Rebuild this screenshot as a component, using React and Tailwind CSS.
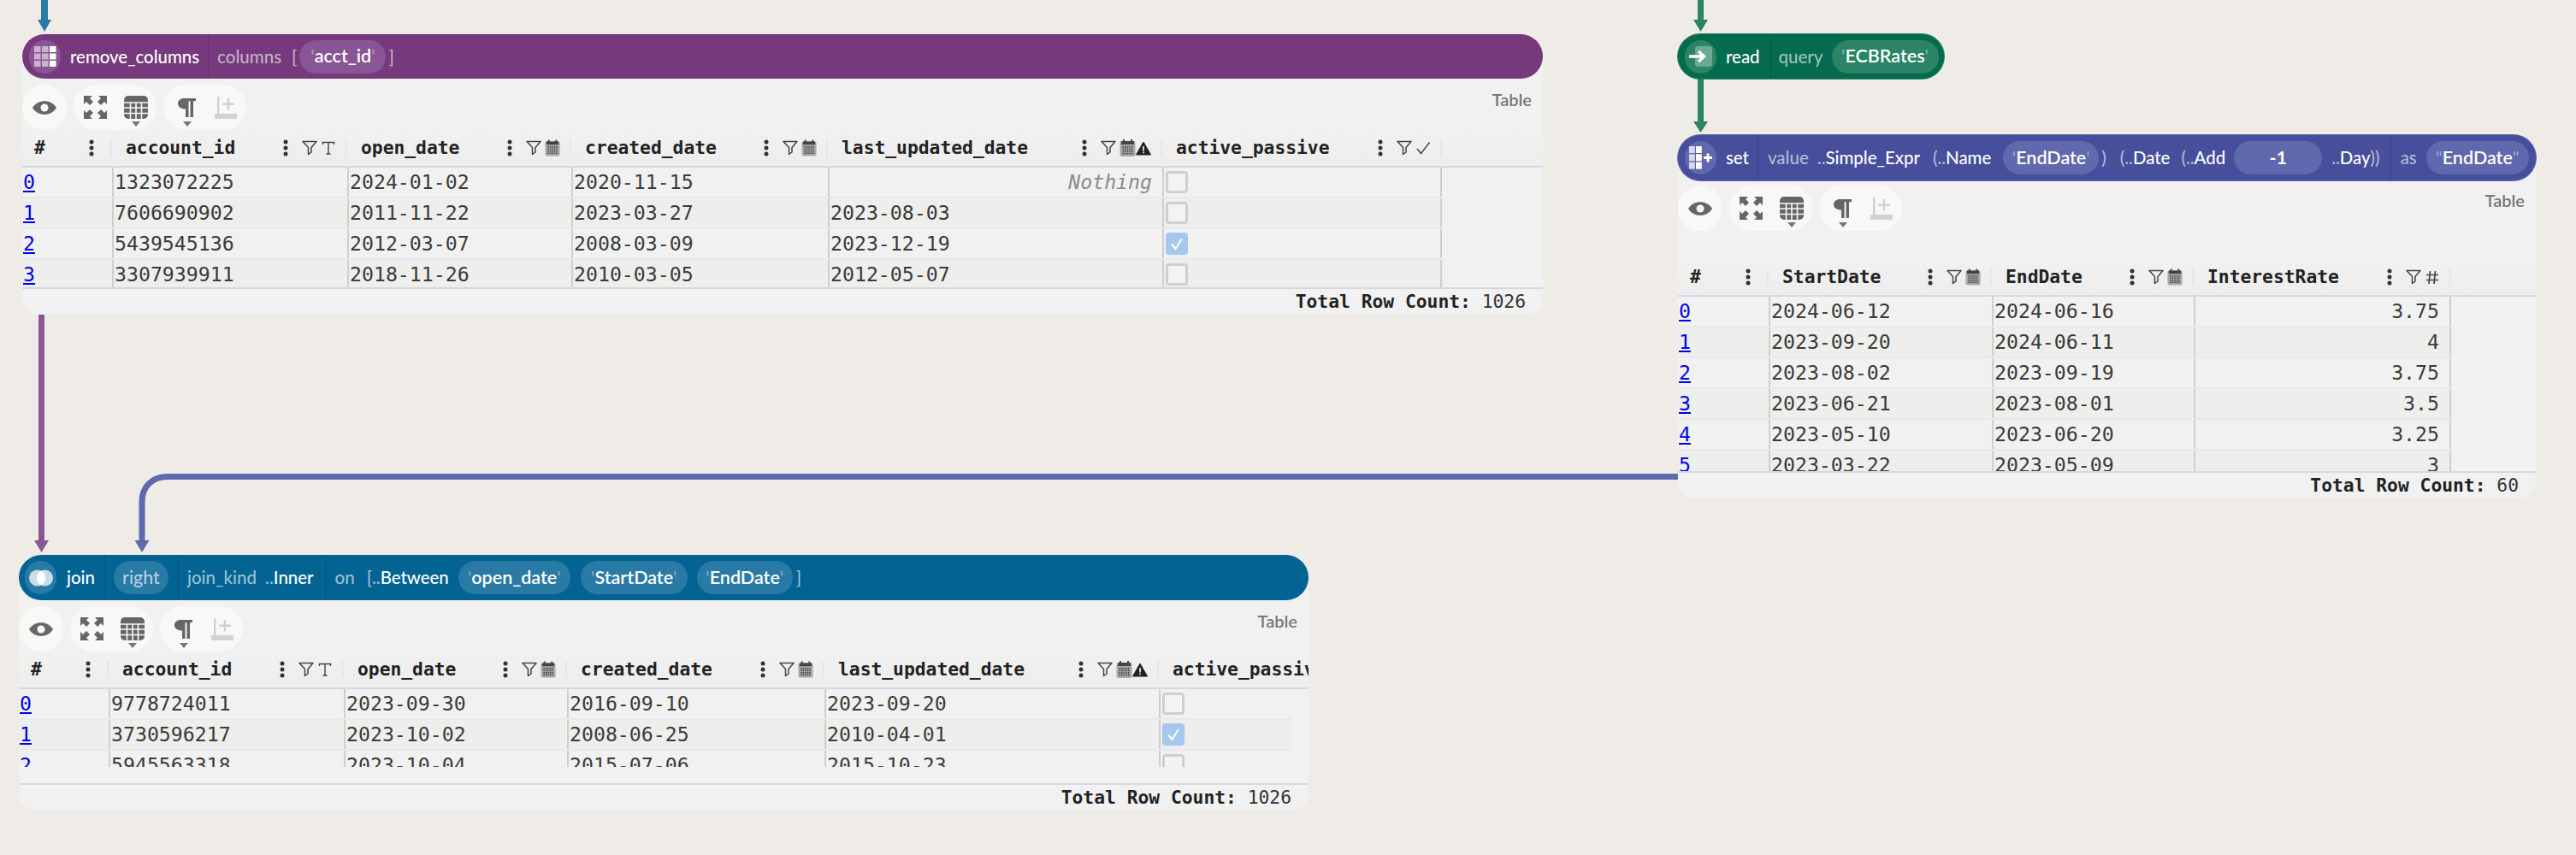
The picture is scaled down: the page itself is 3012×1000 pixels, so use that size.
import React from "react";

const MONO = "[font-family:'DejaVu_Sans_Mono',monospace]";
const UI = "[font-family:'Lato',sans-serif]";

function Eye() {
  return (
    <svg width="28" height="16" viewBox="0 0 28 16">
      <path d="M0 8C6-2.5 22-2.5 28 8C22 18.5 6 18.5 0 8Z" fill="#666" />
      <circle cx="14" cy="8" r="4.5" fill="#f8f8f7" />
    </svg>
  );
}
function Expand() {
  const a = "M0 0H10L7 3L11 7L7 11L3 7L0 10Z";
  return (
    <svg width="27" height="27" viewBox="0 0 27 27" fill="#666">
      <path d={a} />
      <path d={a} transform="translate(27 0) scale(-1 1)" />
      <path d={a} transform="translate(0 27) scale(1 -1)" />
      <path d={a} transform="translate(27 27) scale(-1 -1)" />
    </svg>
  );
}
function GridIcon() {
  return (
    <svg width="28" height="27" viewBox="0 0 28 27">
      <rect width="28" height="27" rx="5" fill="#666" />
      <g stroke="#f8f8f7" strokeWidth="1.6">
        <path d="M0 8H28M0 14H28M0 20.5H28M7.5 8V27M14 8V27M20.5 8V27" />
      </g>
    </svg>
  );
}
function Pilcrow() {
  return (
    <svg width="21" height="22" viewBox="0 0 21 22" fill="#666">
      <path d="M7.5 0H21V3.2H18V22H14.5V3.2H12.5V22H9V12.5C3.5 12.5 0 10 0 6.2S3 0 7.5 0Z" />
    </svg>
  );
}
function AddRow() {
  return (
    <svg width="26" height="26" viewBox="0 0 26 26" fill="#d2d2d2">
      <rect x="0" y="20" width="26" height="6" />
      <rect x="3" y="0" width="2.5" height="20" />
      <rect x="9" y="7.5" width="14" height="2.5" />
      <rect x="14.7" y="2" width="2.5" height="13.5" />
    </svg>
  );
}
function Tri() {
  return (
    <svg width="10" height="6" viewBox="0 0 10 6" className="absolute left-1/2 -translate-x-1/2 top-[30px]">
      <path d="M0 0H10L5 6Z" fill="#777" />
    </svg>
  );
}
function Kebab() {
  return (
    <svg width="6" height="20" viewBox="0 0 6 20" fill="#333" className="shrink-0">
      <circle cx="3" cy="3" r="2.5" />
      <circle cx="3" cy="10" r="2.5" />
      <circle cx="3" cy="17" r="2.5" />
    </svg>
  );
}
function Funnel() {
  return (
    <svg width="18" height="18" viewBox="0 0 18 18" fill="none" stroke="#444" strokeWidth="1.5" strokeLinejoin="round">
      <path d="M1 1.5H17L11 8.5V14L7.5 16.5V8.5Z" />
    </svg>
  );
}
function Calendar() {
  const dots = [];
  for (let r = 0; r < 4; r++) for (let c = 0; c < 5; c++) dots.push(<rect key={r + "-" + c} x={3.5 + c * 2.6} y={8 + r * 2.6} width="1.6" height="1.6" />);
  return (
    <svg width="19" height="20" viewBox="0 0 19 20">
      <rect x="0.5" y="2" width="18" height="18" rx="2" fill="#a8a8a8" />
      <rect x="2" y="2" width="15" height="4" fill="#444" />
      <rect x="4" y="0" width="2" height="3" fill="#444" />
      <rect x="13" y="0" width="2" height="3" fill="#444" />
      <g fill="#444">{dots}</g>
    </svg>
  );
}
function Warn() {
  return (
    <svg width="18" height="17" viewBox="0 0 18 17">
      <path d="M9 1L17.5 16H.5Z" fill="#222" stroke="#222" strokeLinejoin="round" />
      <rect x="8.2" y="6" width="1.7" height="5.5" fill="#f1f1f1" />
      <rect x="8.2" y="12.5" width="1.7" height="1.7" fill="#f1f1f1" />
    </svg>
  );
}
function Serif() {
  return (
    <svg width="16" height="16" viewBox="0 0 16 16" fill="none" stroke="#444" strokeWidth="1.4">
      <path d="M1.5 4V1.5H14.5V4M8 1.5V15M5.5 15H10.5" />
    </svg>
  );
}
function Check() {
  return (
    <svg width="18" height="16" viewBox="0 0 18 16" fill="none" stroke="#444" strokeWidth="1.4">
      <path d="M2 9L6.5 14.5L16.5 1.5" />
    </svg>
  );
}
function Hash() {
  return (
    <svg width="16" height="17" viewBox="0 0 16 17" fill="none" stroke="#444" strokeWidth="1.7">
      <path d="M5.5 1L4 16M11.5 1L10 16M1 5.5H15M1 11.5H15" />
    </svg>
  );
}

function TypeIcon({ t }) {
  if (t === "T") return <div className="w-[18px] mr-[11px] flex justify-center"><Serif /></div>;
  if (t === "c") return <div className="w-[18px] mr-[11px] flex justify-center"><Check /></div>;
  if (t === "#") return <div className="w-[18px] mr-[11px] flex justify-center"><Hash /></div>;
  if (t === "dw")
    return (
      <div className="flex items-center mr-[11px]">
        <Calendar />
        <Warn />
      </div>
    );
  return <div className="w-[18px] mr-[11px] flex justify-center"><Calendar /></div>;
}

function Toolbar() {
  return (
    <div className="flex gap-[8px]">
      <div className="w-[52px] h-[53px] rounded-full bg-[#f8f8f7] flex items-center justify-center">
        <Eye />
      </div>
      <div className="w-[97px] h-[53px] rounded-full bg-[#f8f8f7] flex items-center pl-[12px]">
        <Expand />
        <div className="relative ml-[20px] h-[27px]">
          <GridIcon />
          <Tri />
        </div>
      </div>
      <div className="w-[97px] h-[53px] rounded-full bg-[#f8f8f7] flex items-center pl-[17px]">
        <div className="relative h-[27px] flex items-center">
          <Pilcrow />
          <Tri />
        </div>
        <div className="ml-[22px]"><AddRow /></div>
      </div>
    </div>
  );
}

function HeaderCell({ name, type }) {
  return (
    <div className="flex items-center h-full pl-[16px] min-w-0">
      <span className={`flex-1 font-bold text-[21.3px] leading-none text-[#222] whitespace-nowrap ${MONO}`}>{name}</span>
      <Kebab />
      <div className="w-[18px] ml-[16px] mr-[4px] flex justify-center"><Funnel /></div>
      <TypeIcon t={type} />
      <div className="w-[2px] h-[20px] bg-[#e4e6f0] shrink-0" />
    </div>
  );
}

function Box({ on }) {
  if (on)
    return (
      <div className="w-[26px] h-[26px] rounded-[4px] bg-[#a6c8f0] flex items-center justify-center">
        <svg width="16" height="16" viewBox="0 0 16 16" fill="none" stroke="#fff" strokeWidth="2">
          <path d="M2 8.5L6.5 14L14 2" />
        </svg>
      </div>
    );
  return <div className="w-[26px] h-[26px] rounded-[4px] border-[3px] border-[#cfcfcf] bg-[#f3f3f3]" />;
}

function Cell({ v }) {
  const base = `h-full border-l-2 border-[#cfcfcf] flex items-center min-w-0 ${MONO} text-[23.2px] leading-none text-[#3a3a3a]`;
  if (v === null) return <div className={`${base} justify-end pr-[12px] italic text-[#8a8a8a]`}>Nothing</div>;
  if (v === true || v === false)
    return (
      <div className={`${base} pl-[2px]`}>
        <Box on={v} />
      </div>
    );
  if (typeof v === "string" && v.startsWith("r:"))
    return <div className={`${base} justify-end pr-[12px]`}>{v.replace("r:", "")}</div>;
  return <div className={`${base} pl-[1px]`}>{v}</div>;
}

function Table({ cols, columns, rows, bodyClass, bodyW, rowBorder }) {
  return (
    <>
      <div className={`grid ${cols} h-[44px] border-b-2 border-[#d6d8de] bg-gradient-to-b from-[#f1f1f1] to-[#ecedec] shrink-0`}>
        <div className="flex items-center h-full pl-[14px] pr-[19px]">
          <span className={`flex-1 font-bold text-[21.3px] leading-none text-[#222] ${MONO}`}>#</span>
          <Kebab />
          <div className="w-[2px] h-[20px] bg-[#e4e6f0] ml-[19px] -mr-[19px]" />
        </div>
        {columns.map((c) => (
          <HeaderCell key={c[0]} name={c[0]} type={c[1]} />
        ))}
      </div>
      <div className={`${bodyClass} overflow-hidden shrink-0`}>
        <div className={bodyW}>
          {rows.map((r, i) => (
            <div
              key={i}
              className={`grid ${cols} h-[36px] border-b-2 border-[#e9e9ed] ${i % 2 ? "bg-[#eeeeec]" : "bg-[#f1f1f1]"} ${rowBorder ? "[&>*:last-child]:border-r-2" : ""}`}
            >
              <div className={`h-full flex items-center pl-[1px] text-[23.2px] leading-none text-[#0000ee] underline ${MONO}`}>{i}</div>
              {r.map((v, j) => (
                <Cell key={j} v={v} />
              ))}
            </div>
          ))}
        </div>
      </div>
    </>
  );
}

function Footer({ count, pr }) {
  return (
    <div className={`h-[32px] border-t-2 border-[#d6d8de] flex items-center justify-end ${pr} ${MONO} text-[21.3px] leading-none text-[#222]`}>
      <b>Total Row Count:</b>
      <span className="whitespace-pre text-[#333]"> {count}</span>
    </div>
  );
}

function Pill({ children, cls, w }) {
  return (
    <div className={`h-[39px] rounded-full flex items-center justify-center text-white text-[21.5px] font-semibold shrink-0 ${cls} ${w}`}>
      {children}
    </div>
  );
}
const Q = ({ c = "'" }) => <span className="opacity-40 font-normal">{c}</span>;
const Dim = ({ children, className = "" }) => <span className={`text-white/60 text-[20.5px] whitespace-pre ${className}`}>{children}</span>;
const Sep = ({ className = "" }) => <div className={`w-[1px] self-stretch bg-black/15 shrink-0 ${className}`} />;

function IconCircle({ cls, children, className = "" }) {
  return <div className={`w-[37px] h-[39px] rounded-full flex items-center justify-center shrink-0 ${cls} ${className}`}>{children}</div>;
}

function RemoveIcon() {
  return (
    <svg width="26" height="24" viewBox="0 0 26 24">
      {[0, 1, 2].map((r) =>
        [0, 1, 2].map((c) => (
          <rect key={r + "" + c} x={c * 9} y={r * 8.5} width="7.5" height="7" fill="#fff" opacity={c === 2 ? 1 : 0.55} />
        ))
      )}
    </svg>
  );
}
function ReadIcon() {
  return (
    <svg width="27" height="24" viewBox="0 0 27 24">
      <rect x="7" y="0" width="20" height="24" rx="3" fill="#fff" opacity="0.3" />
      <path d="M0 12H17M11 6L17.5 12L11 18" fill="none" stroke="#fff" strokeWidth="3.4" />
    </svg>
  );
}
function SetIcon() {
  return (
    <svg width="28" height="27" viewBox="0 0 28 27">
      {[0, 1, 2].map((r) =>
        [0, 1].map((c) => (
          <rect key={r + "" + c} x={c * 8} y={r * 9.3} width="6.8" height="8" fill="#fff" opacity={c === 0 ? 0.75 : 1} />
        ))
      )}
      <path d="M17 13.5H27M22 8.5V18.5" stroke="#fff" strokeWidth="3" />
    </svg>
  );
}
function JoinIcon() {
  return (
    <svg width="28" height="26" viewBox="0 0 28 26">
      <circle cx="9.5" cy="13" r="9.5" fill="#fff" opacity="0.75" />
      <circle cx="18.5" cy="13" r="9.5" fill="#fff" opacity="0.75" />
      <path d="M14 4.6A9.5 9.5 0 0 1 14 21.4A9.5 9.5 0 0 1 14 4.6Z" fill="#fff" />
    </svg>
  );
}

function Edges() {
  return (
    <svg className="absolute left-0 top-0" width="3012" height="1000" viewBox="0 0 3012 1000">
      <g fill="#2a7aa6" stroke="none">
        <rect x="48" y="0" width="8" height="26" />
        <path d="M44 23H60L52 37Z" />
      </g>
      <g fill="#2a8465">
        <rect x="1985" y="0" width="7" height="26" />
        <path d="M1980 23H1997L1988.5 37Z" />
        <rect x="1985" y="90" width="7" height="56" />
        <path d="M1980 142H1997L1988.5 155Z" />
      </g>
      <g>
        <rect x="45" y="366" width="7" height="270" fill="#8a5694" />
        <path d="M40 632H57L48.5 646Z" fill="#8a5694" />
        <path d="M1965 557.5H196C178 557.5 166 569 166 587V636" fill="none" stroke="#6068ae" strokeWidth="7" />
        <path d="M157.500 632H174.500L166 646Z" fill="#6068ae" />
      </g>
    </svg>
  );
}

const t1rows = [
  ["1323072225", "2024-01-02", "2020-11-15", null, false],
  ["7606690902", "2011-11-22", "2023-03-27", "2023-08-03", false],
  ["5439545136", "2012-03-07", "2008-03-09", "2023-12-19", true],
  ["3307939911", "2018-11-26", "2010-03-05", "2012-05-07", false],
];
const joinRows = [
  ["9778724011", "2023-09-30", "2016-09-10", "2023-09-20", false],
  ["3730596217", "2023-10-02", "2008-06-25", "2010-04-01", true],
  ["5945563318", "2023-10-04", "2015-07-06", "2015-10-23", false],
];
const setRows = [
  ["2024-06-12", "2024-06-16", "r:3.75"],
  ["2023-09-20", "2024-06-11", "r:4"],
  ["2023-08-02", "2023-09-19", "r:3.75"],
  ["2023-06-21", "2023-08-01", "r:3.5"],
  ["2023-05-10", "2023-06-20", "r:3.25"],
  ["2023-03-22", "2023-05-09", "r:3"],
];
const acctCols = [
  ["account_id", "T"],
  ["open_date", "d"],
  ["created_date", "d"],
  ["last_updated_date", "dw"],
  ["active_passive", "c"],
];

const barText = `text-[20.4px] font-medium leading-none text-white whitespace-pre ${UI}`;
const tableLabel = `absolute right-[13px] top-[2px] text-[20px] font-semibold text-[#777] ${UI}`;

export default function App() {
  return (
    <div className="relative w-[3012px] h-[1000px] overflow-hidden bg-[#efece7]">
      <Edges />

      {/* remove_columns */}
      <div className="absolute left-[26px] top-[40px] w-[1778px]">
        <div className={`relative z-10 h-[52px] rounded-full bg-[#763a7c] flex items-center pl-[8px] ${barText}`}>
          <IconCircle cls="bg-[#8a5594]"><RemoveIcon /></IconCircle>
          <span className="ml-[11px]">remove_columns</span>
          <Sep className="ml-[10px]" />
          <Dim className="ml-[10px]">columns</Dim>
          <Dim className="ml-[12px] mr-[3px]">[</Dim>
          <Pill cls="bg-[#8a5594]" w="w-[101px]">
            <Q />acct_id<Q />
          </Pill>
          <Dim className="ml-[3px]">]</Dim>
        </div>
        <div className="-mt-[26px] pt-[26px] bg-[#f1f1f1] rounded-b-[20px] flex flex-col">
          <div className="relative mt-[7px]">
            <Toolbar />
            <span className={tableLabel}>Table</span>
          </div>
          <Table
            cols="grid-cols-[105px_275px_262px_300px_391px_327px]"
            columns={acctCols}
            rows={t1rows}
            bodyClass="h-[140px]"
            bodyW="w-[1662px]"
            rowBorder
          />
          <Footer count="1026" pr="pr-[20px]" />
        </div>
      </div>

      {/* read */}
      <div className={`absolute left-[1962px] top-[40px] w-[311px] h-[52px] rounded-full bg-[#056b4f] ring-1 ring-[#2a8465] flex items-center pl-[8px] ${barText}`}>
        <IconCircle cls="bg-[#2a8465]"><ReadIcon /></IconCircle>
        <span className="ml-[11px]">read</span>
        <Sep className="ml-[12px]" />
        <Dim className="ml-[9px]">query</Dim>
        <Pill cls="bg-[#2a8465] ml-[10px]" w="w-[125px]">
          <Q />ECBRates<Q />
        </Pill>
      </div>

      {/* set */}
      <div className="absolute left-[1962px] top-[158px] w-[1003px]">
        <div className={`relative z-10 h-[53px] rounded-full bg-[#474f9c] ring-1 ring-[#6068ae] flex items-center pl-[8px] ${barText}`}>
          <IconCircle cls="bg-[#6068ae]"><SetIcon /></IconCircle>
          <span className="ml-[11px]">set</span>
          <Sep className="ml-[10px]" />
          <Dim className="ml-[11px]">value</Dim>
          <Dim className="ml-[10px]">..</Dim>
          <span>Simple_Expr</span>
          <Dim className="ml-[15px]">(..</Dim>
          <span>Name</span>
          <Pill cls="bg-[#6068ae] ml-[14px]" w="w-[112px]">
            <Q />EndDate<Q />
          </Pill>
          <Dim className="ml-[3px]">)</Dim>
          <Dim className="ml-[16px]">(..</Dim>
          <span>Date</span>
          <Dim className="ml-[13px]">(..</Dim>
          <span>Add</span>
          <Pill cls="bg-[#6068ae] ml-[10px]" w="w-[103px]">
            <span className="font-bold">-1</span>
          </Pill>
          <Dim className="ml-[11px]">..</Dim>
          <span>Day</span>
          <Dim>))</Dim>
          <Sep className="ml-[12px]" />
          <Dim className="ml-[11px]">as</Dim>
          <Pill cls="bg-[#6068ae] ml-[11px]" w="w-[120px]">
            <Q c={'"'} />EndDate<Q c={'"'} />
          </Pill>
        </div>
        <div className="-mt-[26px] pt-[26px] bg-[#f1f1f1] rounded-b-[20px] flex flex-col">
          <div className="relative mt-[6px]">
            <Toolbar />
            <span className={tableLabel}>Table</span>
          </div>
          <div className="mt-[33px]" />
          <Table
            cols="grid-cols-[106px_261px_236px_301px]"
            columns={[
              ["StartDate", "d"],
              ["EndDate", "d"],
              ["InterestRate", "#"],
            ]}
            rows={setRows}
            bodyClass="h-[204px]"
            bodyW="w-[905px]"
            rowBorder
          />
          <Footer count="60" pr="pr-[20px]" />
        </div>
      </div>

      {/* join */}
      <div className="absolute left-[22px] top-[649px] w-[1508px]">
        <div className={`relative z-10 h-[53px] rounded-full bg-[#036494] flex items-center pl-[7px] ${barText}`}>
          <IconCircle cls="bg-[#2a7aa6]"><JoinIcon /></IconCircle>
          <span className="ml-[12px]">join</span>
          <Sep className="ml-[11px]" />
          <Pill cls="bg-[#2a7aa6] ml-[10px] !font-normal" w="w-[64px]">
            <span className="text-white/70">right</span>
          </Pill>
          <Sep className="ml-[11px]" />
          <Dim className="ml-[10px]">join_kind</Dim>
          <Dim className="ml-[10px]">..</Dim>
          <span>Inner</span>
          <Sep className="ml-[14px]" />
          <Dim className="ml-[10px]">on</Dim>
          <Dim className="ml-[14px]">[..</Dim>
          <span>Between</span>
          <Pill cls="bg-[#2a7aa6] ml-[11px]" w="w-[131px]">
            <Q />open_date<Q />
          </Pill>
          <Pill cls="bg-[#2a7aa6] ml-[12px]" w="w-[125px]">
            <Q />StartDate<Q />
          </Pill>
          <Pill cls="bg-[#2a7aa6] ml-[11px]" w="w-[112px]">
            <Q />EndDate<Q />
          </Pill>
          <Dim className="ml-[4px]">]</Dim>
        </div>
        <div className="-mt-[26px] pt-[26px] bg-[#f1f1f1] rounded-b-[20px] flex flex-col overflow-hidden">
          <div className="relative mt-[7px]">
            <Toolbar />
            <span className={tableLabel}>Table</span>
          </div>
          <Table
            cols="grid-cols-[105px_275px_261px_301px_391px_327px]"
            columns={acctCols}
            rows={joinRows}
            bodyClass="h-[91px]"
            bodyW="w-[1488px] overflow-hidden"
          />
          <div className="h-[19px]" />
          <Footer count="1026" pr="pr-[20px]" />
        </div>
      </div>
    </div>
  );
}
